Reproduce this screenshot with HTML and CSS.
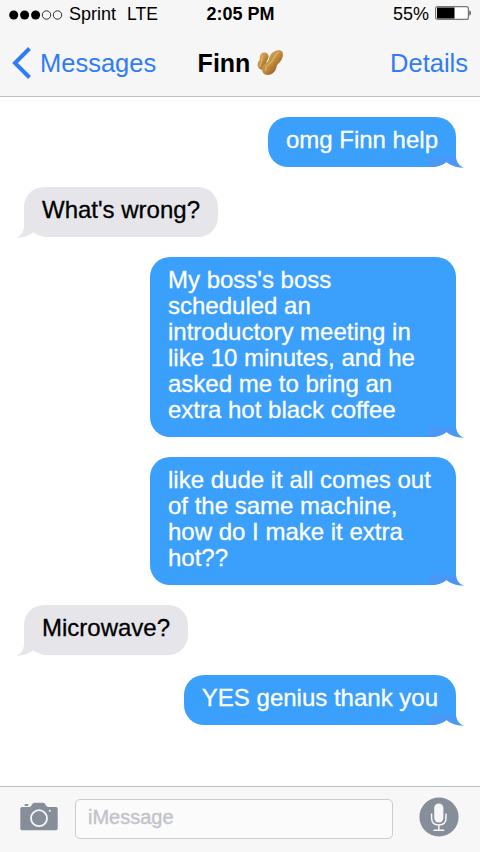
FILE: index.html
```html
<!DOCTYPE html>
<html lang="en">
<head>
<meta charset="utf-8">
<meta name="viewport" content="width=device-width, initial-scale=1">
<title>Messages</title>
<link rel="stylesheet" href="styles.css">
</head>
<body>

<svg class="defs" width="0" height="0">
  <symbol id="tail" viewBox="0 0 35 12">
    <path class="tail-gap" d="M3 12 V11 Q11 11 17.500 6 Q24 11 35 12 Z"/>
    <path class="tail-edge" d="M0 1 H27 C27.500 6 30 10 35 11.700 C28 12 22 9.500 17.500 6 C13 9.500 8 11 0 11 Z"/>
  </symbol>
</svg>

<header>
  <div class="status">
    <div class="carrier">
      <svg class="signal" width="54" height="12" viewBox="0 0 54 12">
        <circle cx="4.7" cy="6" r="4.5"/>
        <circle cx="15.6" cy="6" r="4.5"/>
        <circle cx="26.6" cy="6" r="4.5"/>
        <circle class="empty" cx="37.5" cy="6" r="4.2"/>
        <circle class="empty" cx="48.5" cy="6" r="4.2"/>
      </svg>
      <span>Sprint</span>
      <span class="network">LTE</span>
    </div>
    <div class="time">2:05 PM</div>
    <div class="battery">
      <span>55%</span>
      <svg width="37" height="14" viewBox="0 0 37 14">
        <rect x=".6" y=".6" width="32.8" height="12.8" rx="2" fill="#fff" stroke="#777" stroke-width="1.2"/>
        <rect x="2" y="1.5" width="17.5" height="11" fill="#000"/>
        <path d="M34.5 4 Q37 7 34.5 10 Z" fill="#222"/>
      </svg>
    </div>
  </div>
  <nav>
    <a class="back">
      <svg width="19" height="32" viewBox="0 0 19 32"><path d="M17.5 1.5 L3 16 L17.5 30.5" fill="none" stroke="#2f7cf6" stroke-width="4"/></svg>
      <span>Messages</span>
    </a>
    <div class="contact">
      <span>Finn</span>
      <svg width="26" height="26" viewBox="0 0 26 26">
        <defs>
          <linearGradient id="shell" x1="0" y1="0" x2="1" y2="1">
            <stop offset="0" stop-color="#e0b467"/>
            <stop offset=".5" stop-color="#c18c3e"/>
            <stop offset="1" stop-color="#6e4213"/>
          </linearGradient>
        </defs>
        <path d="M4 4 C7 1 12 3 11.500 7 C11 10 9 11 9 14 C9 18 6 21 3 19 C0 17 0 13 2 11 C4 9 1.500 7 4 4 Z" fill="url(#shell)"/>
        <path d="M15 3 C18 0 24 -1 25.500 2 C27 7 24 11 21 14 C19 16 20 19 17 22 C14 26 7 26 5.500 22 C4 18 6 14 9.500 12.500 C13 11 11 7 15 3 Z" fill="url(#shell)"/>
        <path d="M22 2 C16 5 18 11 12 14 C9 16 8 18 9 21 M5 5 C7 9 3 12 3 17" fill="none" stroke="#f0cd88" stroke-width="1.500" opacity=".5"/>
      </svg>
    </div>
    <a class="details">Details</a>
  </nav>
</header>

<main>
  <div class="bubble me">omg Finn help<svg class="tail"><use href="#tail"/></svg></div>
  <div class="bubble them">What's wrong?<svg class="tail"><use href="#tail"/></svg></div>
  <div class="bubble me">My boss's boss scheduled an introductory meeting in like 10 minutes, and he asked me to bring an extra hot black coffee<svg class="tail"><use href="#tail"/></svg></div>
  <div class="bubble me">like dude it all comes out of the same machine, how do I make it extra hot??<svg class="tail"><use href="#tail"/></svg></div>
  <div class="bubble them">Microwave?<svg class="tail"><use href="#tail"/></svg></div>
  <div class="bubble me">YES genius thank you<svg class="tail"><use href="#tail"/></svg></div>
</main>

<footer>
  <svg class="camera" width="38" height="29" viewBox="0 0 38 29">
    <path d="M2 5 H9 Q11 5 12 2.500 Q12.800 .8 14.500 .8 H23 Q24.700 .8 25.500 2.500 Q26.500 5 28.500 5 H36 Q37.700 5 37.700 6.700 V26.500 Q37.700 28.300 36 28.300 H2 Q.3 28.300 .3 26.500 V6.700 Q.3 5 2 5 Z" fill="#868e9a"/>
    <rect x="4.500" y="2" width="4" height="2" rx="1" fill="#868e9a"/>
    <circle cx="19" cy="16.200" r="8" fill="none" stroke="#f7f7f7" stroke-width="1.800"/>
    <circle cx="29.800" cy="8.700" r="1" fill="#f7f7f7"/>
  </svg>
  <div class="field">iMessage</div>
  <svg class="mic" width="40" height="40" viewBox="0 0 40 40">
    <circle cx="20" cy="20" r="19.600" fill="#868e9a"/>
    <rect x="15.200" y="6.500" width="9.200" height="19" rx="4.600" fill="#f7f7f7"/>
    <path d="M12.600 16.500 V21 Q12.600 28 19.800 28 Q27 28 27 21 V16.500 M19.800 28 V33 M14.500 33.300 H25.200" fill="none" stroke="#f7f7f7" stroke-width="1.500"/>
  </svg>
</footer>

</body>
</html>
```
FILE: styles.css
```css
* {
	box-sizing: border-box;
}

body {
	margin: 0;
	height: 852px;
	display: flex;
	flex-direction: column;
	overflow: hidden;
	background-color: #ffffff;
	font-family: "Liberation Sans", Arial, Helvetica, sans-serif;
}

.defs {
	position: absolute;
}

header {
	height: 97px;
	background-color: #f6f6f6;
	border-bottom: 1px solid #bebebe;
}

.status {
	display: grid;
	grid-template-columns: 1fr auto 1fr;
	align-items: center;
	height: 28px;
	padding: 0 8px 0 9px;
	font-size: 18px;
}

.carrier,
.battery {
	display: flex;
	align-items: center;
}

.signal {
	margin: 2px 6px 0 0;
}

.signal .empty {
	fill: none;
	stroke: #000000;
	stroke-width: 0.8;
}

.network {
	margin-left: 11px;
	font-size: 17.5px;
}

.time {
	font-weight: bold;
}

.battery {
	justify-content: flex-end;
	gap: 6px;
}

.battery svg {
	margin-top: -3px;
}

nav {
	display: grid;
	grid-template-columns: 1fr auto 1fr;
	align-items: center;
	height: 70px;
	padding: 0 12px 0 12px;
	font-size: 25.5px;
}

nav a {
	color: #2f7cf6;
}

.back {
	display: flex;
	align-items: center;
	gap: 9px;
}

.contact {
	display: flex;
	align-items: center;
	gap: 7px;
	padding-left: 1px;
	font-size: 25px;
	font-weight: bold;
}

.details {
	text-align: right;
}

main {
	flex: 1;
	display: flex;
	flex-direction: column;
	gap: 20px;
	padding: 20px 24px;
}

.bubble {
	position: relative;
	max-width: 306px;
	padding: 10px 18px 14px;
	border-radius: 20px;
	font-size: 24px;
	line-height: 26px;
	-webkit-text-stroke: 0.3px;
}

.me {
	align-self: flex-end;
	background-color: #3b9ffc;
	color: #ffffff;
	border-bottom-right-radius: 0;
}

.them {
	align-self: flex-start;
	background-color: #e5e5ea;
	color: #000000;
	border-bottom-left-radius: 0;
}

/* the tail hangs 8px outside the bubble */
.tail {
	position: absolute;
	right: -8px;
	bottom: -1px;
	width: 35px;
	height: 12px;
	fill: #4a98f4;
	-webkit-text-stroke: 0;
}

.them .tail {
	right: auto;
	left: -8px;
	transform: scaleX(-1);
	fill: #e5e5ea;
}

.tail-gap {
	fill: #ffffff;
}

footer {
	display: flex;
	align-items: center;
	height: 66px;
	padding: 0 21px 1px 20px;
	background-color: #f7f7f7;
	border-top: 1px solid #b6bec5;
}

.camera {
	margin-top: -6px;
}

.field {
	flex: 1;
	height: 40px;
	margin: 0 26px 0 17px;
	padding-left: 12px;
	border: 1px solid #cccccf;
	border-radius: 5px;
	background-color: #fbfbfb;
	color: #c3c3c9;
	font-size: 20px;
	line-height: 34px;
	-webkit-text-stroke: 0.4px;
}

.mic {
	margin-top: -5px;
}
```
